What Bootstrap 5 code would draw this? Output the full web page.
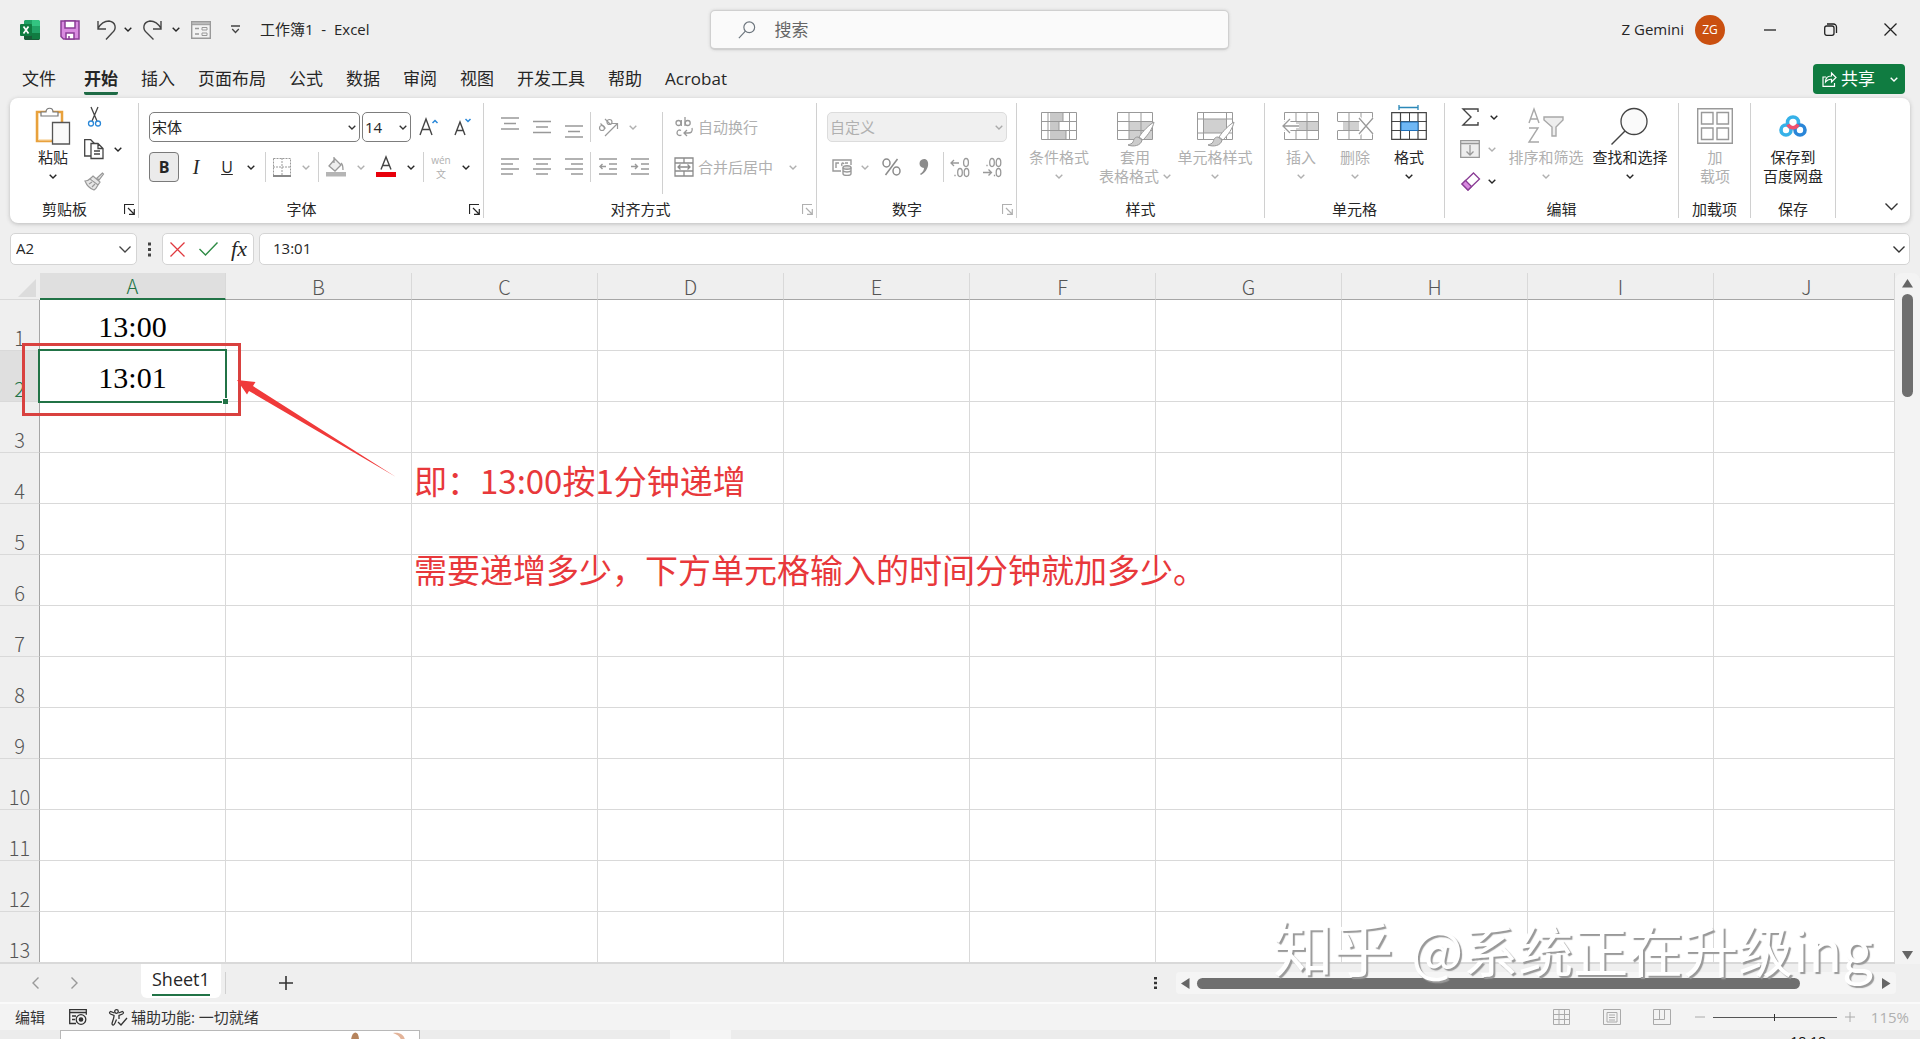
<!DOCTYPE html>
<html lang="zh-CN">
<head>
<meta charset="utf-8">
<meta name="viewport" content="width=device-width, initial-scale=1">
<title>工作簿1 - Excel</title>
<link href="https://cdn.jsdelivr.net/npm/bootstrap@5.3.0/dist/css/bootstrap.min.css" rel="stylesheet">
<style>
:root{--ui:"Open Sans","Noto Sans CJK SC",sans-serif;--cjk:"Noto Sans CJK SC",sans-serif;--ink:#262626;--off:#b0b0b0;--bg:#efefef;--green:#107c41}
body{font-family:var(--ui);font-size:15px;color:var(--ink);background:var(--bg);height:100vh;overflow:hidden}
svg{display:block;flex:none;overflow:visible}
button{border:0;background:none;padding:0;color:inherit;font:inherit}
.ib{display:flex;align-items:center;justify-content:center;flex:none;height:30px}
.w16{width:16px}.w20{width:20px}.w28{width:28px}.w30{width:30px}.w32{width:32px}.w34{width:34px}.w36{width:36px}
.w54{width:54px}.w68{width:68px}.w72{width:72px}.w84{width:84px}.w92{width:92px}
.off{color:var(--off)}
.on-bold{border:1px solid #7a7a7a;border-radius:4px;background:#ebebeb}
/* title bar */
.titlebar{height:59px;padding:0 12px 0 20px}
.quick{margin-left:20px}
.save-btn{margin-right:12px}
.doc-name{font-size:15px;margin-left:8px}
.search-box{left:37%;width:27%;top:10px;height:40px;background:#fafafa;border:1px solid #d0d0d0;border-bottom-width:2px;border-radius:5px;padding-left:27px;box-shadow:0 0 3px #ccc}
.search-box input{border:0;background:none;outline:0;font-size:17px;color:#555}
.search-box input::placeholder{color:#666}
.avatar{width:30px;height:30px;border-radius:50%;background:#ca5010;color:#fff;font-size:12px;margin:0 27px 0 11px}
/* ribbon tabs */
.tabs{height:39px;padding:5px 15px 0 22px;font-size:17px;line-height:30px}
.tab-list{gap:23px}
.tabs a{color:var(--ink);text-decoration:none;display:block;height:31px}
.tabs .current{font-weight:700;border-bottom:3px solid #1e6b45;border-radius:0 0 2px 2px;margin:0 0 0 5px}
.share{height:30px;width:92px;border-radius:4px;background:var(--green);color:#fff;padding:0 7px 0 9px}
/* ribbon */
.ribbon{background:#fff;border-radius:8px;margin:0 10px;height:125px;padding:5px 0 4px;box-shadow:0 1px 4px #bbb}
.grp{border-right:1px solid #d0d0d0;flex:none;margin-bottom:1px}
.g-clip{width:129px;padding-left:16px}.g-font{width:345px}.g-align{width:333px}.g-num{width:200px}.g-style{width:248px}.g-cell{width:180px}.g-edit{width:234px}.g-add{width:72px}.g-save{width:85px}
.grp-name{height:18px;line-height:18px;text-align:center}
.grp-name svg{margin-right:3px}
.grp-name span{padding-right:5px}
.g-clip .grp-name{margin-left:-16px}
.rows{padding-top:9px;gap:10px}
.in9{padding-left:9px}.in10{padding-left:10px}.in11{padding-left:11px}
.left-rows{width:168px}
.stack3{gap:4px}
.stack3 .ib{height:28px}
.big{display:flex;flex-direction:column;align-items:center;flex:none;padding-top:5px;line-height:19px;white-space:nowrap;align-self:flex-start}
.big .pic{height:36px;margin-bottom:4px;display:flex;align-items:center}
.big .cvline{height:19px;display:flex;align-items:center}
.sep{width:1px;background:#d0d0d0;align-self:stretch;flex:none}
.tall-sep{margin:9px 0 6px}
.serif-i{font:italic 20px/30px "Liberation Serif",serif}
.pinyin{font-size:10px;line-height:14px}
.box-select{height:30px;border:1px solid #7d7d7d;border-radius:5px;background-color:#fff;color:var(--ink);font:inherit;padding:0 4px 0 2px;appearance:none;background-image:url("data:image/svg+xml,%3Csvg xmlns='http://www.w3.org/2000/svg' width='8' height='5'%3E%3Cpath d='M.7.7 4 4 7.3.7' fill='none' stroke='%23333' stroke-width='1.3'/%3E%3C/svg%3E");background-repeat:no-repeat;background-position:right 3px center}
.box-select:disabled{background-color:#f0f0f0;border-color:#dcdcdc;color:var(--off);opacity:1;background-image:url("data:image/svg+xml,%3Csvg xmlns='http://www.w3.org/2000/svg' width='8' height='5'%3E%3Cpath d='M.7.7 4 4 7.3.7' fill='none' stroke='%23aaa' stroke-width='1.3'/%3E%3C/svg%3E")}
.s-name{width:211px}.s-size{width:49px;margin-left:2px}.s-num{width:180px}
/* formula bar */
.fbar{margin:10px 10px 8px 10px;height:32px}
.fbox{background:#fff;border:1px solid #d4d4d4;border-radius:5px;height:32px}
.fbox input{border:0;outline:0;background:none;min-width:0;color:var(--ink);font-size:15px;padding:0 0 1px}
.name-box{width:127px;padding:0 5px}
.fx-box{width:92px;padding:0 6px 0 7px}
.value-box{margin-left:5px;padding:0 4px 0 13px}
.fx{font:italic 22px/28px "Liberation Serif",serif}
/* grid */
.sheet{min-height:0;position:relative}
.grid-wrap{overflow:hidden;position:relative;border-bottom:2px solid #d9d9d9;border-right:1px solid #d9d9d9}
.cells{border-collapse:separate;border-spacing:0;table-layout:fixed;width:1900px;font-family:var(--cjk)}
.cells th{font-weight:300;font-size:20px;color:#555;text-align:center;padding:0;background:var(--bg)}
.cells thead th{height:27px;line-height:25px;border-right:1px solid #d9d9d9;border-bottom:1px solid #a6a6a6}
.cells thead th:first-child{width:40px;border-right-color:transparent;border-bottom-color:#d9d9d9}
.cells thead .sel{background:#dfdfdf;color:#217346;border-bottom:2px solid #217346}
.cells tbody th{height:51px;vertical-align:bottom;line-height:24px;border-right:1px solid #a6a6a6;border-bottom:1px solid #d9d9d9}
.cells tbody .sel{background:#dfdfdf;color:#217346}
.cells td{background:#fff;border-right:1px solid #d9d9d9;border-bottom:1px solid #d9d9d9;text-align:center;padding:3px 0 0;font:30px/30px "Liberation Serif",serif;color:#000;position:relative}
.cells .active-cell::before{content:"";position:absolute;inset:-2px;border:2px solid #217346;z-index:1}
.cells .active-cell::after{content:"";position:absolute;right:-3px;bottom:-3px;width:6px;height:6px;background:#217346;border:solid #fff;border-width:1px 0 0 1px;z-index:2}
.corner{margin:4px 0 0 18px}
.notes{position:absolute;left:0;top:0;z-index:3}
.note-text{position:absolute;left:414px;font:400 33px/44px var(--cjk);color:#e8383b;white-space:nowrap;z-index:3}
.note-1{top:185px}.note-2{top:274px}
.vscroll{width:25px;background:#f3f3f3;border-radius:8px 8px 0 0;padding:6px 0 4px}
.vthumb{width:11px;height:103px;border-radius:6px;background:#6f6f6f;margin-top:6px}
.watermark{position:absolute;right:47px;bottom:56px;z-index:5;font:400 55px/70px var(--cjk);color:#fff;text-shadow:2px 2px 1px #999;white-space:nowrap}
.wm-logo{font-size:60px;line-height:1;margin-right:18px}
/* sheet tabs */
.sheetbar{height:38px;padding:0 24px 0 32px}
.sheet-tab{background:#fff;border-radius:0 0 6px 6px;height:34px;padding:1px 11px 0;margin-left:63px;align-self:flex-start;color:var(--ink);text-decoration:none;font-size:18px;line-height:29px}
.sheet-tab span{display:block;border-bottom:2px solid #217346}
.new-sheet{margin-left:46px}
.hscroll{width:720px;height:22px;background:#f5f5f5;padding:0 5px;border-radius:4px;margin-left:19px}
.hthumb{width:603px;height:11px;border-radius:6px;background:#6f6f6f;margin-left:7px}
/* status bar */
.status{height:28px;background:#f3f3f3;border-top:2px solid #fafafa;padding:0 11px 0 15px;color:#333}
.status .pct{color:var(--off);margin-left:16px}
.acc-icon{margin:0 3px 0 22px}
.view-left{margin-left:-3px}
.view-mid{margin:0 32px 0 33px}
.zoom-range{appearance:none;width:124px;height:13px;margin:0 8px;background:linear-gradient(#555,#555) center/100% 1px no-repeat}
.zoom-range::-webkit-slider-thumb{appearance:none;width:1px;height:7px;background:#333}
.task{height:9px;overflow:hidden;background:#ececec}
.task-search{width:360px;margin-left:60px;border:1px solid #b8b8b8;background:#fff;height:14px;padding-left:284px}
.task-app{width:61px;margin-left:250px;background:#f5f5f5;height:9px}
.clock{margin:3px 94px 0 auto;font-size:14px;line-height:18px;color:#111}
</style>
</head>
<body class="d-flex flex-column">
<svg width="0" height="0" class="position-absolute" aria-hidden="true"><defs>
<symbol id="cv" viewBox="0 0 8 5"><path d="M.7.7 4 4 7.3.7" fill="none" stroke="currentColor" stroke-width="1.4"/></symbol>
<symbol id="launch" viewBox="0 0 11 11"><path d="M.5 10V.5H10M4 4l6 6M10.300 5v5.300H5" fill="none" stroke="currentColor" stroke-width="1.200"/></symbol>
<symbol id="mag" viewBox="0 0 20 20"><circle cx="12.500" cy="7" r="6" fill="none" stroke="currentColor" stroke-width="1.300"/><path d="M8.200 11.300 1 19" stroke="currentColor" stroke-width="1.300"/></symbol>
<symbol id="brush" viewBox="0 0 30 26"><path d="M28 1c-5 3-11 9-15 15l4 3C22 14 27 7 28 1z" fill="#fff" stroke="#999"/><path d="M12 16c-4 0-4 3-5 5-1 2-3 2-5 3 5 2 13 1 14-5z" fill="#ccc" stroke="#999"/></symbol>
</defs></svg>

<header class="titlebar d-flex align-items-center position-relative flex-shrink-0">
  <svg width="20" height="20" viewBox="0 0 20 20"><path d="M5 0h8v10H4V1z" fill="#21a366"/><path d="M12 0h7l1 1v5h-8z" fill="#33c481"/><path d="M4 6h8v8H4z" fill="#107c41"/><path d="M12 6h8v7h-8z" fill="#21a366"/><path d="M4 13h16v6l-1 1H5l-1-1z" fill="#185c37"/><path d="M12 13h8v6h-8z" fill="#107c41"/><rect y="4" width="12" height="12" rx="1" fill="#107c41"/><path d="m3.500 6.500 5 7M8.500 6.500l-5 7" stroke="#fff" stroke-width="1.700"/></svg>
  <div class="quick d-flex">
    <button class="ib w20 save-btn" aria-label="保存"><svg width="20" height="20" viewBox="0 0 20 20"><path d="M1 1h18v18H3.500L1 16.500z" fill="#d98be0" stroke="#8a3c95" stroke-width="1.500"/><path d="M5 1h10v7H5zM6 13h8v6H6z" fill="#fff" stroke="#8a3c95" stroke-width="1.500"/><path d="M9 16v3" stroke="#8a3c95" stroke-width="1.500"/></svg></button>
    <button class="ib w28" aria-label="撤消"><svg width="19" height="20" viewBox="0 0 19 20"><path d="M1 1v8h8M1 8.500C4 3 8 1 12 1c7 1 8 8 3 12L9 19.500" fill="none" stroke="#444" stroke-width="1.400"/></svg></button>
    <button class="ib w16" aria-label="撤消选项"><svg width="8" height="5"><use href="#cv"/></svg></button>
    <button class="ib w32" aria-label="恢复"><svg width="19" height="20" viewBox="0 0 19 20"><path d="M18 1v8h-8M18 8.500C15 3 11 1 7 1 0 2-1 9 4 13l6.500 6.500" fill="none" stroke="#444" stroke-width="1.400"/></svg></button>
    <button class="ib w16" aria-label="恢复选项"><svg width="8" height="5"><use href="#cv"/></svg></button>
    <button class="ib w34" aria-label="表单"><svg width="20" height="18" viewBox="0 0 20 18"><path d="M.7.7h18.600v16.600H.7z" fill="#f3f3f3" stroke="#999" stroke-width="1.400"/><path d="M.7.7h18.600v3H.7z" fill="#bbb" stroke="#999"/><path d="M4 7.500h4M4 13h4" stroke="#999" stroke-width="1.400"/><path d="M11 6.500h5v2.500h-5zM11 12h5v2.500h-5z" fill="none" stroke="#999"/></svg></button>
    <button class="ib w34" aria-label="自定义快速访问工具栏"><svg width="9" height="9" viewBox="0 0 9 9"><path d="M0 1h9M1.200 4l3.300 3.500L7.800 4" fill="none" stroke="#444" stroke-width="1.300"/></svg></button>
  </div>
  <span class="doc-name">工作簿1 &nbsp;- &nbsp;Excel</span>
  <label class="search-box position-absolute d-flex align-items-center gap-3">
    <svg width="18" height="20" class="text-secondary"><use href="#mag"/></svg>
    <input type="search" placeholder="搜索" aria-label="搜索">
  </label>
  <div class="ms-auto d-flex align-items-center">
    <span>Z Gemini</span>
    <span class="avatar d-flex align-items-center justify-content-center">ZG</span>
    <div class="d-flex gap-4">
    <button class="ib w36" aria-label="最小化"><svg width="12" height="2"><path d="M0 1h12" stroke="#222" stroke-width="1.300"/></svg></button>
    <button class="ib w36" aria-label="还原"><svg width="13" height="13" viewBox="0 0 13 13" fill="none" stroke="#222" stroke-width="1.300"><rect x=".7" y="3" width="9.300" height="9.300" rx="2"/><path d="M3 1h6.500a3 3 0 0 1 3 3v6"/></svg></button>
    <button class="ib w36" aria-label="关闭"><svg width="13" height="13"><path d="m.5.5 12 12M12.500.5l-12 12" stroke="#222" stroke-width="1.300"/></svg></button>
    </div>
  </div>
</header>

<nav class="tabs d-flex justify-content-between flex-shrink-0">
  <div class="tab-list d-flex">
    <a href="#">文件</a><a href="#" class="current">开始</a><a href="#">插入</a><a href="#">页面布局</a><a href="#">公式</a><a href="#">数据</a><a href="#">审阅</a><a href="#">视图</a><a href="#">开发工具</a><a href="#">帮助</a><a href="#">Acrobat</a>
  </div>
  <button class="share d-flex align-items-center">
    <svg width="15" height="15" viewBox="0 0 15 15" fill="none" stroke="#fff" stroke-width="1.200"><path d="M4 5H1v9.300h11.500V11M3.500 10c0-4 2-6 6-6V1L14 5.500 9.500 10V7.300C7 7 5 8 3.500 10z"/></svg>
    <span class="ms-1 me-auto">共享</span><svg width="8" height="5"><use href="#cv"/></svg>
  </button>
</nav>

<section class="ribbon d-flex flex-shrink-0">
  <div class="grp g-clip d-flex flex-column">
    <div class="d-flex flex-fill">
      <button class="big w54"><span class="pic"><svg width="36" height="38" viewBox="0 0 36 38"><path d="M2 5h25v29H2z" fill="#fff" stroke="#e8a13c" stroke-width="2.500"/><path d="M3.500 7v26h13" fill="none" stroke="#fbdfb3"/><path d="M6 9V5h5c0-5 7-5 7 0h5v4z" fill="#fff" stroke="#777" stroke-width="1.200"/><path d="M17.500 15.500h17V37h-17z" fill="#fafafa" stroke="#555" stroke-width="1.300"/></svg></span>粘贴<span class="cvline"><svg width="8" height="5"><use href="#cv"/></svg></span></button>
      <div class="stack3 d-flex flex-column">
        <button class="ib w28" aria-label="剪切"><svg width="13" height="20" viewBox="0 0 13 20" fill="none" stroke-width="1.300"><path d="M3 0l6 14M10 0 4 14" stroke="#444"/><circle cx="3" cy="16.500" r="2.500" stroke="#2b88d8"/><circle cx="10" cy="16.500" r="2.500" stroke="#2b88d8"/></svg></button>
        <div class="d-flex"><button class="ib w28" aria-label="复制"><svg width="20" height="20" viewBox="0 0 20 20" fill="#fff" stroke="#444" stroke-width="1.300"><path d="M.7.7h6l4 4V17H.7z"/><path d="M7 4.500h7l5 5v10H7zM14 4.500v5h5M10 12h6M10 15h6"/></svg></button><button class="ib w20" aria-label="复制选项"><svg width="8" height="5"><use href="#cv"/></svg></button></div>
        <button class="ib w28" aria-label="格式刷" disabled><svg width="20" height="19" viewBox="0 0 20 19" fill="#e6e6e6" stroke="#999" stroke-width="1.200"><path d="M18.500 1 13 6l2 2 4.500-6zM9 4l7 6-2 3-8-6zM7 6C5 8 3 9 1 9c2 5 6 8 9 9 2-1 3-3 4-5M5 12l3-2M8 15l3-3"/></svg></button>
      </div>
    </div>
    <div class="grp-name d-flex align-items-center"><span class="flex-fill">剪贴板</span><svg width="11" height="11"><use href="#launch"/></svg></div>
  </div>

  <div class="grp g-font d-flex flex-column">
    <div class="rows in10 d-flex flex-column flex-fill">
      <div class="d-flex"><select class="box-select s-name" aria-label="字体"><option>宋体</option></select><select class="box-select s-size" aria-label="字号"><option>14</option></select>
        <button class="ib w34" aria-label="增大字号"><svg width="19" height="18" viewBox="0 0 19 18" fill="none"><path d="M1 17 7 1l6 16M3 11.500h8" stroke="#444" stroke-width="1.400"/><path d="m13.500 5 2.500-2.500L18.500 5" stroke="#2b88d8" stroke-width="1.500"/></svg></button>
        <button class="ib w34" aria-label="减小字号"><svg width="17" height="16" viewBox="0 0 17 16" fill="none"><path d="M1 16 6 3l5 13M2.500 11.500h7" stroke="#444" stroke-width="1.400"/><path d="m11.500 0 2.500 2.500L16.500 0" stroke="#2b88d8" stroke-width="1.500"/></svg></button></div>
      <div class="d-flex">
        <button class="ib w30 on-bold fw-bold fs-6">B</button>
        <button class="ib w34 serif-i">I</button>
        <button class="ib w28 text-decoration-underline fs-6">U</button>
        <button class="ib w20" aria-label="下划线选项"><svg width="8" height="5"><use href="#cv"/></svg></button>
        <span class="sep ms-1"></span>
        <button class="ib w32 off" aria-label="边框"><svg width="18" height="19" viewBox="0 0 18 19"><path d="M.5.5h17v17H.5zM9 0v18M0 9h18" fill="none" stroke="#999" stroke-dasharray="2 1"/><path d="M0 18h18" stroke="#888" stroke-width="2"/></svg></button>
        <button class="ib w16 off" aria-label="边框选项"><svg width="8" height="5"><use href="#cv"/></svg></button>
        <span class="sep ms-1"></span>
        <button class="ib w34 off" aria-label="填充颜色"><svg width="20" height="20" viewBox="0 0 20 20"><path d="m9 2 6 6-6 6-6-5zM8 0v6M15 6c2 1 2 4 2 7" fill="#eee" stroke="#999" stroke-width="1.300"/><path d="M0 15h20v4.500H0z" fill="#b5b5b5"/></svg></button>
        <button class="ib w16 off" aria-label="填充选项"><svg width="8" height="5"><use href="#cv"/></svg></button>
        <button class="ib w34" aria-label="字体颜色"><svg width="20" height="20" viewBox="0 0 20 20"><path d="M5 12.500 10 0l5 12.500M6.500 8.500h7" fill="none" stroke="#444" stroke-width="1.400"/><path d="M0 15h20v5H0z" fill="#e8000b"/></svg></button>
        <button class="ib w16" aria-label="颜色选项"><svg width="8" height="5"><use href="#cv"/></svg></button>
        <span class="sep ms-1"></span>
        <button class="ib w34 off flex-column pinyin"><span>wén</span><span>文</span></button>
        <button class="ib w16" aria-label="拼音选项"><svg width="8" height="5"><use href="#cv"/></svg></button>
      </div>
    </div>
    <div class="grp-name d-flex align-items-center"><span class="flex-fill">字体</span><svg width="11" height="11"><use href="#launch"/></svg></div>
  </div>

  <div class="grp g-align d-flex flex-column">
    <div class="d-flex flex-fill in10">
      <div class="rows left-rows d-flex flex-column">
        <div class="d-flex off">
          <button class="ib w32" aria-label="顶端对齐"><svg width="18" height="22" stroke="#999" stroke-width="1.400"><path d="M0 2h18M3 7.500h12M0 13h18"/></svg></button>
          <button class="ib w32" aria-label="垂直居中"><svg width="18" height="22" stroke="#999" stroke-width="1.400"><path d="M0 5.500h18M3 11h12M0 16.500h18"/></svg></button>
          <button class="ib w32" aria-label="底端对齐"><svg width="18" height="22" stroke="#999" stroke-width="1.400"><path d="M0 10h18M3 15.500h12M0 21h18"/></svg></button>
          <span class="sep"></span>
          <button class="ib w34" aria-label="方向"><svg width="20" height="20" viewBox="0 0 20 20" fill="none" stroke="#999" stroke-width="1.200"><circle cx="4" cy="11" r="2.500"/><path d="m2.500 6.500 5 5M7 2l5.500 5.500"/><circle cx="11.500" cy="5" r="2.500"/><path d="M7 19 19 7M14 6.500h5.500V12"/></svg></button>
          <button class="ib w16" aria-label="方向选项"><svg width="8" height="5"><use href="#cv"/></svg></button>
        </div>
        <div class="d-flex off">
          <button class="ib w32" aria-label="左对齐"><svg width="18" height="18" stroke="#999" stroke-width="1.400"><path d="M0 1h18M0 6h12M0 11h18M0 16h12"/></svg></button>
          <button class="ib w32" aria-label="居中"><svg width="18" height="18" stroke="#999" stroke-width="1.400"><path d="M0 1h18M3 6h12M0 11h18M3 16h12"/></svg></button>
          <button class="ib w32" aria-label="右对齐"><svg width="18" height="18" stroke="#999" stroke-width="1.400"><path d="M0 1h18M6 6h12M0 11h18M6 16h12"/></svg></button>
          <span class="sep"></span>
          <button class="ib w34" aria-label="减少缩进"><svg width="18" height="18" fill="none" stroke="#999" stroke-width="1.400"><path d="M0 1h18M10 6h8M10 11h8M0 16h18M7 8.500H1M3.500 6 1 8.500 3.500 11"/></svg></button>
          <button class="ib w30" aria-label="增加缩进"><svg width="18" height="18" fill="none" stroke="#999" stroke-width="1.400"><path d="M0 1h18M10 6h8M10 11h8M0 16h18M0 8.500h6M4 6l2.500 2.500L4 11"/></svg></button>
        </div>
      </div>
      <span class="sep tall-sep"></span>
      <div class="rows d-flex flex-column in11">
        <button class="ib off justify-content-start"><svg width="20" height="20" viewBox="0 0 20 20" fill="none" stroke="#999" stroke-width="1.300"><circle cx="4.500" cy="6" r="2.500"/><path d="M7.300 3v6M11 0v9"/><circle cx="13.700" cy="6" r="2.500"/><path d="M7 13.500c-4-2.500-6 5-1 5l1.500-.5M18 11c1 4-1 5-4 5h-3.500M13 13l-3 3 3 3"/></svg><span class="ms-1">自动换行</span></button>
        <button class="ib off justify-content-start"><svg width="20" height="20" viewBox="0 0 20 20" fill="none" stroke="#8c8c8c" stroke-width="1.300"><path d="M1 1h18v18H1zM1 6h18M1 14h18M10 1v5M10 14v5"/><path d="M4 10h12M6.500 7.500 4 10l2.500 2.500M13.500 7.500 16 10l-2.500 2.500"/></svg><span class="ms-1 me-3">合并后居中</span><svg width="8" height="5"><use href="#cv"/></svg></button>
      </div>
    </div>
    <div class="grp-name d-flex align-items-center"><span class="flex-fill">对齐方式</span><svg width="11" height="11" class="off"><use href="#launch"/></svg></div>
  </div>

  <div class="grp g-num d-flex flex-column">
    <div class="rows in10 d-flex flex-column flex-fill">
      <select class="box-select s-num" disabled aria-label="数字格式"><option>自定义</option></select>
      <div class="d-flex off">
        <button class="ib w30" aria-label="会计格式"><svg width="20" height="18" viewBox="0 0 20 18" fill="none" stroke="#999" stroke-width="1.400"><path d="M9 13H1V2h18v5M4 10V5h3M13 5h3M10 8c-1-3 1-4 2-2"/><ellipse cx="15" cy="9.500" rx="4" ry="1.800" fill="#ddd"/><path d="M11 9.500v6c0 2.500 8 2.500 8 0v-6M11 12.500c1 2 7 2 8 0"/></svg></button>
        <button class="ib w16" aria-label="会计选项"><svg width="8" height="5"><use href="#cv"/></svg></button>
        <button class="ib w36" aria-label="百分比"><svg width="19" height="18" viewBox="0 0 19 18" fill="none" stroke="#8c8c8c" stroke-width="1.500"><ellipse cx="4.500" cy="5" rx="3.500" ry="4"/><ellipse cx="14.500" cy="13" rx="3.500" ry="4"/><path d="M15.500 1 3.500 17"/></svg></button>
        <button class="ib w30" aria-label="千位分隔"><svg width="10" height="16" viewBox="0 0 10 16"><path d="M5 0c6 0 6 11-3 16l-1-1c3-2 4-4 4-6-6 0-6-9 0-9z" fill="#8c8c8c"/></svg></button>
        <span class="sep ms-1"></span>
        <button class="ib w32" aria-label="增加小数位"><svg width="18" height="19" viewBox="0 0 18 19" fill="none" stroke="#999" stroke-width="1.300"><path d="M8 5H0M3 2 0 5l3 3M4 18.200v-1.500"/><ellipse cx="15" cy="4.500" rx="2.400" ry="4"/><ellipse cx="9" cy="14.500" rx="2.300" ry="4"/><ellipse cx="15.500" cy="14.500" rx="2.300" ry="4"/></svg></button>
        <button class="ib w32" aria-label="减少小数位"><svg width="18" height="19" viewBox="0 0 18 19" fill="none" stroke="#999" stroke-width="1.300"><path d="M0 14.500h8M5.500 11.500l3 3-3 3M4 8.200V6.700M11.500 18.200v-1.500"/><ellipse cx="9" cy="4.500" rx="2.300" ry="4"/><ellipse cx="15.500" cy="4.500" rx="2.300" ry="4"/><ellipse cx="15.500" cy="14.500" rx="2.300" ry="4"/></svg></button>
      </div>
    </div>
    <div class="grp-name d-flex align-items-center"><span class="flex-fill">数字</span><svg width="11" height="11" class="off"><use href="#launch"/></svg></div>
  </div>

  <div class="grp g-style d-flex flex-column">
    <div class="d-flex flex-fill off">
      <button class="big w84"><span class="pic"><svg width="36" height="28"><path d="M9 0h13v9H9zM9 9h9v9H9zM9 18h16v10H9z" fill="#c8c8c8"/><path d="M.5.5h35v27H.5zM.5 9.500h35M.5 18.500h35M7 .5v27M28.500.5v27M22 .5v9M18 9.500v9M25 18.500v9" fill="none" stroke="#999"/></svg></span>条件格式<span class="cvline"><svg width="8" height="5"><use href="#cv"/></svg></span></button>
      <button class="big w68"><span class="pic"><svg width="36" height="28"><path d="M12 9h23v18H12z" fill="#d0d0d0"/><path d="M.5.5h35v27H.5zM.5 9.500h35M.5 18.500h35M12 .5v27M24 .5v27" fill="none" stroke="#999"/><g transform="translate(9 9)"><use href="#brush" width="30" height="26"/></g></svg></span>套用<span class="d-flex align-items-center gap-1">表格格式<svg width="8" height="5"><use href="#cv"/></svg></span></button>
      <button class="big w92"><span class="pic"><svg width="36" height="28"><path d="M7 7h22v14H7z" fill="#d0d0d0"/><path d="M.5.5h35v27H.5zM.5 7h35M.5 21h35M6.500.5v27M29.500.5v27" fill="none" stroke="#999"/><g transform="translate(9 9)"><use href="#brush" width="30" height="26"/></g></svg></span>单元格样式<span class="cvline"><svg width="8" height="5"><use href="#cv"/></svg></span></button>
    </div>
    <div class="grp-name">样式</div>
  </div>

  <div class="grp g-cell d-flex flex-column">
    <div class="d-flex flex-fill in9">
      <button class="big w54 off"><span class="pic"><svg width="38" height="28"><path d="M14 9h23v9H14z" fill="#d0d0d0"/><path d="M2.500 8V.5h34V27.500h-34V20M2.500 9.500h34M2.500 18.500h34M14 .5v9M25 .5v27M14 18.500v9" fill="none" stroke="#999"/><path d="M17 14H1M8 7l-7 7 7 7" fill="none" stroke="#fff" stroke-width="4"/><path d="M17 14H1M8 7l-7 7 7 7" fill="none" stroke="#999" stroke-width="1.300"/></svg></span>插入<span class="cvline"><svg width="8" height="5"><use href="#cv"/></svg></span></button>
      <button class="big w54 off"><span class="pic"><svg width="36" height="28"><path d="M6 9h16v9H6z" fill="#d0d0d0"/><path d="M.5 9V.5h35V9M.5 19v8.500h35V20M.5 9.500h24M.5 18.500h24M12 .5v27M24 .5v8M24 20v7" fill="none" stroke="#999"/><path d="m22 6 14 16M36 6 22 22" fill="none" stroke="#fff" stroke-width="4"/><path d="m22 6 14 16M36 6 22 22" fill="none" stroke="#999" stroke-width="1.300"/></svg></span>删除<span class="cvline"><svg width="8" height="5"><use href="#cv"/></svg></span></button>
      <button class="big w54"><span class="pic"><svg width="36" height="28"><path d="M.7.7h34.600v26.600H.7zM0 9.500h36M0 18.500h36M9.500 0v28M27 0v28" fill="#fff" stroke="#444" stroke-width="1.200"/><path d="M10 10h17v8.500H10z" fill="#6fb7f5" stroke="#1e6fb8"/><path d="M18.500 1v8.500M18.500 19v8" stroke="#444"/><path d="M8-4.500h19M8-7v5M27-7v5" stroke="#2b88b8" stroke-width="1.300"/></svg></span>格式<span class="cvline"><svg width="8" height="5"><use href="#cv"/></svg></span></button>
    </div>
    <div class="grp-name">单元格</div>
  </div>

  <div class="grp g-edit d-flex flex-column">
    <div class="d-flex flex-fill in11">
      <div class="stack3 d-flex flex-column">
        <div class="d-flex"><button class="ib w28" aria-label="求和"><svg width="17" height="18" viewBox="0 0 17 18"><path d="M16 4V1H1l8 8-8 8h15v-3" fill="none" stroke="#444" stroke-width="1.400"/></svg></button><button class="ib w20" aria-label="求和选项"><svg width="8" height="5"><use href="#cv"/></svg></button></div>
        <div class="d-flex off"><button class="ib w28" aria-label="填充"><svg width="20" height="18" viewBox="0 0 20 18"><path d="M.7.7h18.600v16.600H.7zM.7 3.500h18.600" fill="#eee" stroke="#999" stroke-width="1.300"/><path d="M10 5v10M6.500 11.500 10 15l3.500-3.500" fill="none" stroke="#999" stroke-width="1.300"/></svg></button><button class="ib w16" aria-label="填充选项"><svg width="8" height="5"><use href="#cv"/></svg></button></div>
        <div class="d-flex"><button class="ib w28" aria-label="清除"><svg width="19" height="19" viewBox="0 0 19 19"><path d="M12.500 1 18.500 7 7 18 1 12z" fill="#fff" stroke="#8a3c95" stroke-width="1.300"/><path d="m4.500 8.500 6 6L7 18l-6-6z" fill="#d98be0" stroke="#8a3c95" stroke-width="1.300"/></svg></button><button class="ib w16" aria-label="清除选项"><svg width="8" height="5"><use href="#cv"/></svg></button></div>
      </div>
      <button class="big w84 off"><span class="pic"><svg width="36" height="34" viewBox="0 0 36 34" fill="none" stroke="#a8a8a8" stroke-width="1.400"><path d="M1 14 6 0l5 14M2.500 10h7M1 19h9L1 33h10"/><path d="M16 8h19v3l-7 7v9h-4v-9l-8-7z" fill="#eee"/></svg></span>排序和筛选<span class="cvline"><svg width="8" height="5"><use href="#cv"/></svg></span></button>
      <button class="big w84"><span class="pic"><svg width="38" height="37" viewBox="0 0 38 37"><circle cx="23" cy="13.500" r="13" fill="#fafafa" stroke="#444" stroke-width="1.300"/><path d="M14 23 .5 36.500" stroke="#444" stroke-width="1.400"/></svg></span>查找和选择<span class="cvline"><svg width="8" height="5"><use href="#cv"/></svg></span></button>
    </div>
    <div class="grp-name">编辑</div>
  </div>

  <div class="grp g-add d-flex flex-column">
    <div class="d-flex flex-fill"><button class="big w72 off"><span class="pic"><svg width="36" height="36" fill="none" stroke="#999" stroke-width="1.400"><path d="M.7.7h34.600v34.600H.7zM4.500 4.500h11.500v11.500H4.500zM20 4.500h11.500v11.500H20zM4.500 20h11.500v11.500H4.500zM20 20h11.500v11.500H20z"/></svg></span>加<span>载项</span></button></div>
    <div class="grp-name">加载项</div>
  </div>
  <div class="grp g-save d-flex flex-column">
    <div class="d-flex flex-fill"><button class="big w84"><span class="pic"><svg width="28" height="22" viewBox="0 0 28 22" fill="none" stroke-width="3.600"><circle cx="14" cy="7.500" r="5.500" stroke="#36b1e8"/><circle cx="7" cy="15" r="5" stroke="#36b1e8"/><circle cx="21" cy="15" r="5" stroke="#2a86d8"/><path d="M9 9.500a5.500 5.500 0 0 0 10 0" stroke="#f0506e"/></svg></span>保存到<span>百度网盘</span></button></div>
    <div class="grp-name">保存</div>
  </div>
  <button class="ms-auto align-self-end me-2 px-1 pb-2" aria-label="折叠功能区"><svg width="13" height="8"><path d="m.5.5 6 6 6-6" fill="none" stroke="#333" stroke-width="1.400"/></svg></button>
</section>

<div class="fbar d-flex flex-shrink-0">
  <label class="fbox name-box d-flex align-items-center"><input class="flex-fill" value="A2" aria-label="名称框"><svg width="12" height="7"><path d="m.5.5 5.500 5.500L11.500.5" fill="none" stroke="#444" stroke-width="1.300"/></svg></label>
  <svg width="25" height="32"><path d="M11 9.500h3v3h-3zM11 15h3v3h-3zM11 20.500h3v3h-3z" fill="#444"/></svg>
  <div class="fbox fx-box d-flex align-items-center justify-content-between">
    <button aria-label="取消"><svg width="16" height="15"><path d="m.5.5 14 14M14.500.5l-14 14" stroke="#e0383e" stroke-width="1.300"/></svg></button>
    <button aria-label="输入"><svg width="19" height="14"><path d="m.5 7 6 6L18.500.5" fill="none" stroke="#2e8b45" stroke-width="1.400"/></svg></button>
    <button class="fx" aria-label="插入函数">fx</button>
  </div>
  <label class="fbox value-box flex-fill d-flex align-items-center"><input class="flex-fill" value="13:01" aria-label="编辑栏"><svg width="12" height="7"><path d="m.5.5 5.500 5.500L11.500.5" fill="none" stroke="#333" stroke-width="1.400"/></svg></label>
</div>

<main class="sheet d-flex flex-fill">
  <div class="grid-wrap flex-fill">
    <table class="cells"><thead><tr id="cols"><th><svg class="corner" width="18" height="18"><path d="M18 0v18H0z" fill="#dcdcdc"/></svg></th></tr></thead><tbody id="rows"></tbody></table>
    <svg class="notes" width="420" height="220"><rect x="23.500" y="71.500" width="216" height="70" fill="none" stroke="#d9413f" stroke-width="3"/><path d="M237 107l18.500 2-2.500 4 143 91-147-86-2 3.500z" fill="#f03a3a"/></svg>
    <div class="note-text note-1">即：13:00按1分钟递增</div>
    <div class="note-text note-2">需要递增多少，下方单元格输入的时间分钟就加多少。</div>
  </div>
  <div class="vscroll d-flex flex-column align-items-center flex-shrink-0">
    <svg width="11" height="9"><path d="M5.500 0 11 8.500H0z" fill="#666"/></svg>
    <div class="vthumb"></div>
    <svg width="11" height="9" class="mt-auto"><path d="M5.500 8.500 11 0H0z" fill="#666"/></svg>
  </div>
</main>
<div class="watermark"><span class="wm-logo">知乎</span>@系统正在升级ing</div>

<div class="sheetbar d-flex align-items-center flex-shrink-0">
  <svg width="7" height="12" class="me-4"><path d="M6.500.5 1 6l5.500 5.500" fill="none" stroke="#999" stroke-width="1.400"/></svg>
  <svg width="7" height="12" class="ms-2"><path d="M.5.5 6 6 .5 11.500" fill="none" stroke="#999" stroke-width="1.400"/></svg>
  <a class="sheet-tab" href="#"><span>Sheet1</span></a>
  <span class="sep my-2 ms-1"></span>
  <button class="ib w28 new-sheet" aria-label="新工作表"><svg width="14" height="14"><path d="M7 0v14M0 7h14" stroke="#333" stroke-width="1.600"/></svg></button>
  <svg width="3" height="14" class="ms-auto"><path d="M0 1h3v2.500H0zM0 5.800h3v2.500H0zM0 10.500h3V13H0z" fill="#333"/></svg>
  <div class="hscroll d-flex align-items-center">
    <svg width="9" height="11"><path d="M0 5.500 8.500 0v11z" fill="#666"/></svg>
    <div class="hthumb"></div>
    <svg width="9" height="11" class="ms-auto"><path d="M8.500 5.500 0 0v11z" fill="#666"/></svg>
  </div>
</div>

<footer class="status d-flex align-items-center flex-shrink-0">
  <span>编辑</span>
  <svg width="18" height="16" viewBox="0 0 18 16" class="ms-4" fill="none" stroke="#333" stroke-width="1.300"><path d="M7 14.500H.7V.7h16.600v5M.7 3.500h16.600M3 7h4M3 10.500h3"/><circle cx="12" cy="10.500" r="4.800"/><circle cx="12" cy="10.500" r="1.700" fill="#333"/></svg>
  <svg width="19" height="17" viewBox="0 0 19 17" class="acc-icon" fill="none" stroke="#333" stroke-width="1.300"><circle cx="7.500" cy="2.500" r="1.800"/><path d="M5.500 4 1.500 2.500C0 3 .5 4.500 1.500 5L5 6.500c0 4-2 6-2 8.500 1 2 2 1 3-1l1.500-3.500M9.500 4l4-1.500c1.500.5 1 2 0 2.500L10 6.500V10M9 13l3 3 6-7"/></svg>
  <span>辅助功能: 一切就绪</span>
  <div class="ms-auto d-flex align-items-center">
    <svg width="17" height="16" fill="none" stroke="#aaa"><path d="M.5.5h16v15H.5zM.5 5.500h16M.5 10.500h16M6 .5v15M11.500.5v15"/></svg>
    <svg width="18" height="16" fill="none" stroke="#aaa" class="view-mid"><path d="M.5.5h17v15H.5zM4 3.500h10v9.500H4zM6 6h6M6 8.500h6M6 11h6"/></svg>
    <svg width="18" height="16" fill="none" stroke="#aaa"><path d="M.5.5h17v15H.5zM6.500.5v10M11.500.5v10M1 10.500h10.500"/></svg>
    <svg width="10" height="10" class="ms-4"><path d="M0 5h10" stroke="#aaa"/></svg>
    <input type="range" class="zoom-range" min="10" max="190" value="100" aria-label="缩放">
    <svg width="10" height="10"><path d="M0 5h10M5 0v10" stroke="#aaa"/></svg>
    <span class="pct">115%</span>
  </div>
</footer>
<div class="task d-flex flex-shrink-0">
  <div class="task-search d-flex"><svg width="60" height="12"><path d="M6 9C7-1 14-1 14 9z" fill="#b5835c"/><path d="M48 2c8-1 12 3 12 8h-4c0-4-3-6-8-8z" fill="#e3b49a"/></svg></div>
  <div class="task-app"></div>
  <div class="clock">18:18</div>
</div>

<script src="https://cdn.jsdelivr.net/npm/bootstrap@5.3.0/dist/js/bootstrap.bundle.min.js"></script>
<script>
const cols = 'ABCDEFGHIJ'.split('');
const values = {A1: '13:00', A2: '13:01'};
const head = document.getElementById('cols');
cols.forEach(c => head.insertAdjacentHTML('beforeend', `<th scope="col"${c === 'A' ? ' class="sel"' : ''}>${c}</th>`));
const body = document.getElementById('rows');
for (let r = 1; r <= 13; r++) {
  const tds = cols.map(c => `<td${c + r === 'A2' ? ' class="active-cell"' : ''}>${values[c + r] || ''}</td>`).join('');
  body.insertAdjacentHTML('beforeend', `<tr><th scope="row"${r === 2 ? ' class="sel"' : ''}>${r}</th>${tds}</tr>`);
}
</script>
</body>
</html>
